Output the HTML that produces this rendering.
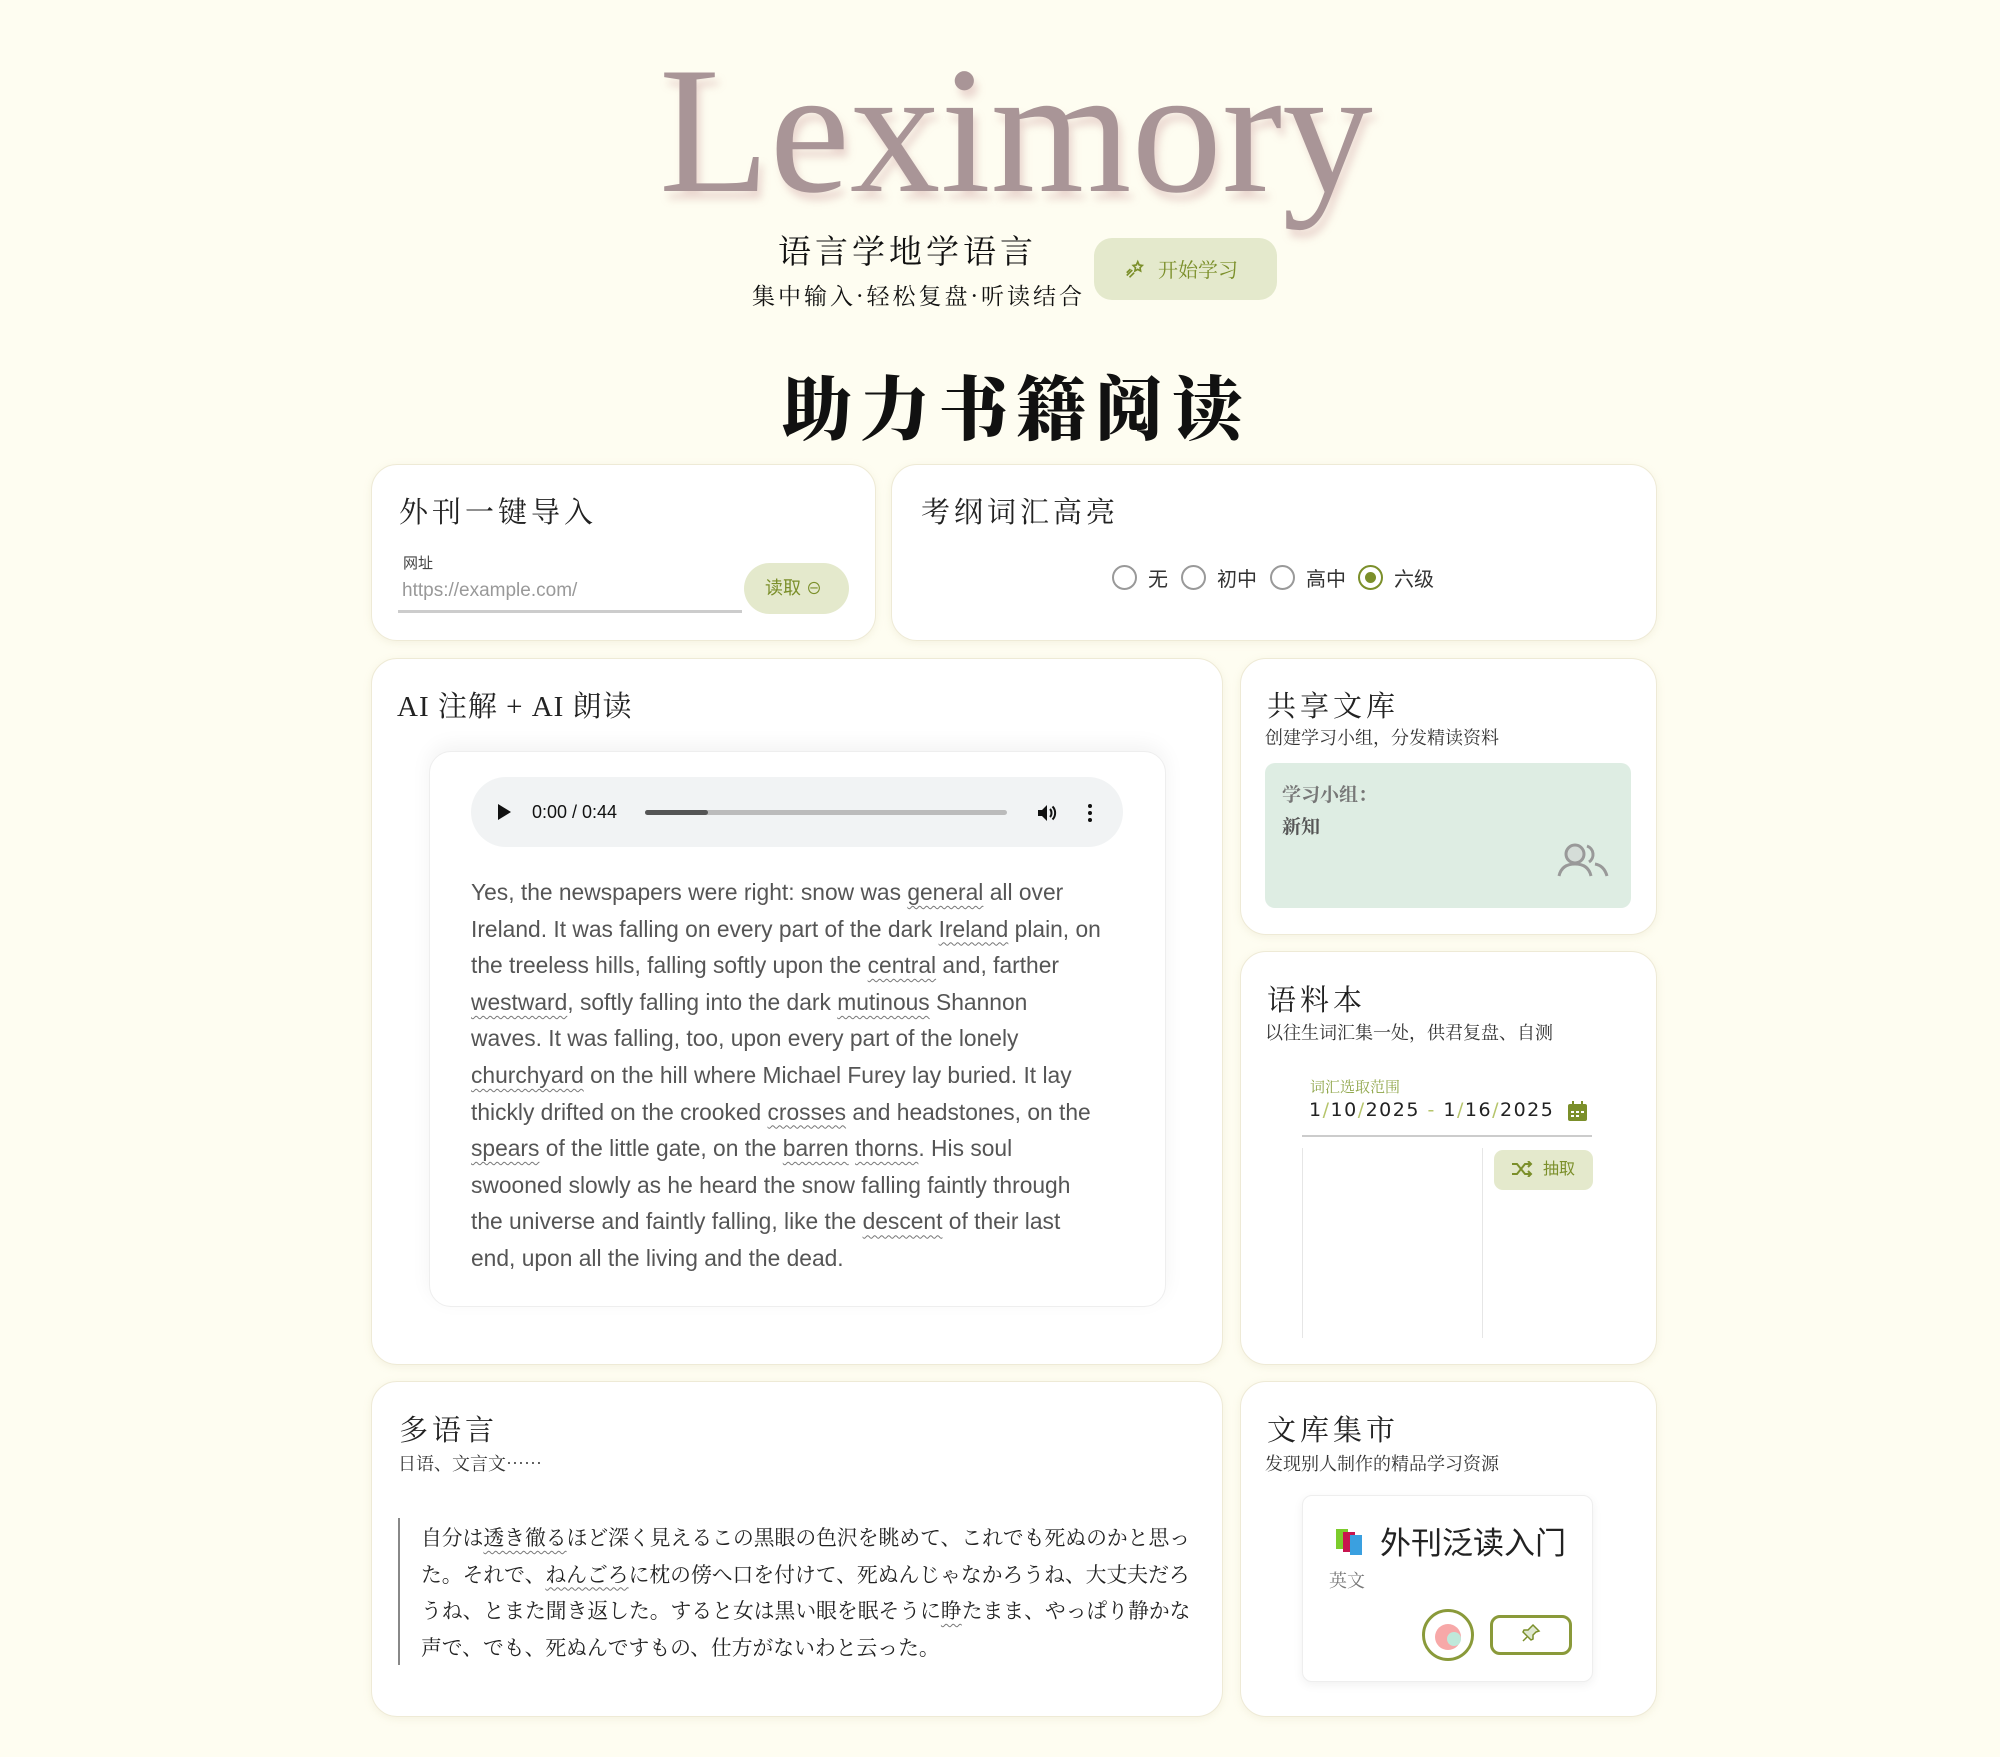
<!DOCTYPE html>
<html><head><meta charset="utf-8">
<style>
*{margin:0;padding:0;box-sizing:border-box}
body{width:2000px;height:1757px;background:#fefdf1;position:relative;overflow:hidden;font-family:"Liberation Sans","Noto Sans CJK SC",sans-serif;color:#222}
.a{position:absolute;white-space:nowrap}
.card{position:absolute;background:#fff;border:1.5px solid #eeead6;border-radius:26px;box-shadow:0 2px 8px rgba(200,190,150,.18)}
.t{position:absolute;font-family:"Noto Serif CJK SC","Liberation Serif",serif;font-size:29px;letter-spacing:4px;color:#222;white-space:nowrap}
.s{position:absolute;font-family:"Noto Serif CJK SC",serif;font-size:18px;color:#333;white-space:nowrap}
.w{text-decoration:underline wavy #777;text-decoration-thickness:1px;text-underline-offset:5px}
.radio{position:absolute;width:25px;height:25px;border:2px solid #999;border-radius:50%}
</style></head><body>

<div class="a" style="left:659px;top:36px;font-family:'Liberation Serif',serif;font-size:181px;line-height:190px;color:#a99597;letter-spacing:0px;text-shadow:4px 8px 8px rgba(200,150,150,.35)">Leximory</div>

<div class="a" style="left:778px;top:226px;font-family:'Noto Serif CJK SC',serif;font-size:33px;letter-spacing:4px;color:#111">语言学地学语言</div>
<div class="a" style="left:752px;top:278px;font-family:'Noto Serif CJK SC',serif;font-size:23px;letter-spacing:3px;color:#111">集中输入·轻松复盘·听读结合</div>
<div class="a" style="left:1094px;top:238px;width:183px;height:62px;background:#e4e9cc;border-radius:18px;color:#7b8f2a;font-size:20px;line-height:62px;padding-left:30px;font-family:'Noto Serif CJK SC',serif">
<svg width="22" height="22" viewBox="0 0 24 24" style="vertical-align:-4px;margin-right:12px" fill="none" stroke="#7b8f2a" stroke-width="1.8"><path d="M15 3l1.5 3.5 3.5.5-2.5 2.5.6 3.5-3.1-1.7-3.1 1.7.6-3.5L10 7l3.5-.5z"/><path d="M9 12l-6 6M11 15l-5 5M7 11l-4 4"/></svg>开始学习</div>

<div class="a" style="left:782px;top:354px;font-family:'Noto Serif CJK SC',serif;font-weight:900;font-size:70px;letter-spacing:8px;color:#111">助力书籍阅读</div>

<!-- row1 -->
<div class="card" style="left:371px;top:464px;width:505px;height:177px"></div>
<div class="t" style="left:399px;top:490px">外刊一键导入</div>
<div class="a" style="left:403px;top:552px;font-size:15px;color:#444">网址</div>
<div class="a" style="left:402px;top:580px;font-size:19px;color:#999">https://example.com/</div>
<div class="a" style="left:398px;top:610px;width:344px;height:3px;background:#ccc"></div>
<div class="a" style="left:744px;top:563px;width:105px;height:51px;border-radius:26px;background:#e4e9cc;color:#7b8f2a;font-size:18px;line-height:51px;padding-left:21px">读取 <span style="font-size:16px">⊖</span></div>

<div class="card" style="left:891px;top:464px;width:766px;height:177px"></div>
<div class="t" style="left:921px;top:490px">考纲词汇高亮</div>
<div class="radio" style="left:1112px;top:565px"></div><div class="a" style="left:1148px;top:563px;font-size:20px;color:#333">无</div>
<div class="radio" style="left:1181px;top:565px"></div><div class="a" style="left:1217px;top:563px;font-size:20px;color:#333">初中</div>
<div class="radio" style="left:1270px;top:565px"></div><div class="a" style="left:1306px;top:563px;font-size:20px;color:#333">高中</div>
<div class="radio" style="left:1358px;top:565px;border-color:#7b8f2a"><div style="position:absolute;left:5px;top:5px;width:11px;height:11px;border-radius:50%;background:#7b8f2a"></div></div><div class="a" style="left:1394px;top:563px;font-size:20px;color:#333">六级</div>

<!-- AI card -->
<div class="card" style="left:371px;top:658px;width:852px;height:707px"></div>
<div class="t" style="left:397px;top:684px;font-family:'Liberation Serif','Noto Serif CJK SC',serif;letter-spacing:1px">AI 注解 + AI 朗读</div>
<div class="a" style="left:429px;top:751px;width:737px;height:556px;background:#fff;border:1.5px solid #eee;border-radius:22px;box-shadow:0 -6px 20px rgba(0,0,0,.05)"></div>
<div class="a" style="left:471px;top:777px;width:652px;height:70px;background:#f1f3f4;border-radius:35px"></div>
<div class="a" style="left:498px;top:804px;width:0;height:0;border-left:13px solid #111;border-top:8px solid transparent;border-bottom:8px solid transparent"></div>
<div class="a" style="left:532px;top:802px;font-size:18px;color:#111">0:00 / 0:44</div>
<div class="a" style="left:645px;top:810px;width:362px;height:5px;background:#bbb;border-radius:3px"><div style="width:63px;height:5px;background:#555;border-radius:3px"></div></div>
<svg class="a" style="left:1035px;top:801px" width="24" height="24" viewBox="0 0 24 24"><path d="M3 9v6h4l5 5V4L7 9z" fill="#111"/><path d="M15 8c2 2 2 6 0 8M17.5 5.5c3.5 3.5 3.5 9.5 0 13" stroke="#111" stroke-width="2" fill="none"/></svg>
<div class="a" style="left:1088px;top:804px;width:4px;height:4px;background:#111;border-radius:50%;box-shadow:0 7px 0 #111,0 14px 0 #111"></div>
<div class="a" style="left:471px;top:874px;font-size:22.8px;line-height:36.6px;color:#555">
Yes, the newspapers were right: snow was <span class="w">general</span> all over<br>
Ireland. It was falling on every part of the dark <span class="w">Ireland</span> plain, on<br>
the treeless hills, falling softly upon the <span class="w">central</span> and, farther<br>
<span class="w">westward</span>, softly falling into the dark <span class="w">mutinous</span> Shannon<br>
waves. It was falling, too, upon every part of the lonely<br>
<span class="w">churchyard</span> on the hill where Michael Furey lay buried. It lay<br>
thickly drifted on the crooked <span class="w">crosses</span> and headstones, on the<br>
<span class="w">spears</span> of the little gate, on the <span class="w">barren</span> <span class="w">thorns</span>. His soul<br>
swooned slowly as he heard the snow falling faintly through<br>
the universe and faintly falling, like the <span class="w">descent</span> of their last<br>
end, upon all the living and the dead.</div>

<!-- shared -->
<div class="card" style="left:1240px;top:658px;width:417px;height:277px"></div>
<div class="t" style="left:1267px;top:684px">共享文库</div>
<div class="s" style="left:1265px;top:724px">创建学习小组，分发精读资料</div>
<div class="a" style="left:1265px;top:763px;width:366px;height:145px;background:#deede3;border-radius:10px"></div>
<div class="a" style="left:1282px;top:778px;font-family:'Noto Serif CJK SC',serif;font-weight:700;font-size:19px;line-height:32px;color:#777">学习小组：<br><span style="color:#555">新知</span></div>
<svg class="a" style="left:1557px;top:842px" width="54" height="36" viewBox="0 0 54 36" fill="none" stroke="#999" stroke-width="3"><circle cx="18" cy="12" r="9" fill="#d5ddd8"/><path d="M2 34c2-9 8-12 16-12s14 3 16 12"/><path d="M30 4a9 9 0 0 1 2 16M38 22c6 1 10 5 12 12"/></svg>

<!-- corpus -->
<div class="card" style="left:1240px;top:951px;width:417px;height:414px"></div>
<div class="t" style="left:1267px;top:978px">语料本</div>
<div class="s" style="left:1265px;top:1019px">以往生词汇集一处，供君复盘、自测</div>
<div class="a" style="left:1310px;top:1076px;font-size:15px;color:#8fa64a;font-family:'Noto Serif CJK SC',serif">词汇选取范围</div>
<div class="a" style="left:1309px;top:1099px;font-family:'DejaVu Sans',sans-serif;font-size:19px;letter-spacing:1.5px;color:#222">1<span style="color:#b5c46a">/</span>10<span style="color:#b5c46a">/</span>2025 <span style="color:#b5c46a">-</span> 1<span style="color:#b5c46a">/</span>16<span style="color:#b5c46a">/</span>2025</div>
<svg class="a" style="left:1567px;top:1101px" width="21" height="21" viewBox="0 0 21 21"><rect x="1" y="3" width="19" height="17" rx="2" fill="#7b8f2a"/><rect x="5" y="0" width="2" height="5" fill="#7b8f2a"/><rect x="14" y="0" width="2" height="5" fill="#7b8f2a"/><g fill="#fff"><rect x="4" y="10" width="3" height="2"/><rect x="9" y="10" width="3" height="2"/><rect x="14" y="10" width="3" height="2"/><rect x="4" y="14" width="3" height="2"/><rect x="9" y="14" width="3" height="2"/></g></svg>
<div class="a" style="left:1302px;top:1135px;width:290px;height:2px;background:#ccc"></div>
<div class="a" style="left:1302px;top:1148px;width:1px;height:190px;background:#e6e6e6"></div>
<div class="a" style="left:1482px;top:1148px;width:1px;height:190px;background:#e6e6e6"></div>
<div class="a" style="left:1494px;top:1150px;width:99px;height:40px;background:#e4e9cc;border-radius:9px;color:#7b8f2a;font-size:16px;line-height:40px;padding-left:17px">
<svg width="22" height="16" viewBox="0 0 22 16" style="vertical-align:-3px;margin-right:10px" fill="none" stroke="#7b8f2a" stroke-width="2"><path d="M1 3h5l8 10h6M1 13h5l8-10h6M17 0l3 3-3 3M17 10l3 3-3 3"/></svg>抽取</div>

<!-- multi -->
<div class="card" style="left:371px;top:1381px;width:852px;height:336px"></div>
<div class="t" style="left:399px;top:1408px">多语言</div>
<div class="s" style="left:398px;top:1450px">日语、文言文……</div>
<div class="a" style="left:398px;top:1518px;width:2px;height:147px;background:#888"></div>
<div class="a" style="left:421px;top:1518px;font-family:'Noto Serif CJK JP',serif;font-size:20.8px;line-height:36.6px;color:#222">自分は<span class="w">透き徹る</span>ほど深く見えるこの黒眼の色沢を眺めて、これでも死ぬのかと思っ<br>た。それで、<span class="w">ねんごろ</span>に枕の傍へ口を付けて、死ぬんじゃなかろうね、大丈夫だろ<br>うね、とまた聞き返した。すると女は黒い眼を眠そうに<span class="w">睁</span>たまま、やっぱり静かな<br>声で、でも、死ぬんですもの、仕方がないわと云った。</div>

<!-- market -->
<div class="card" style="left:1240px;top:1381px;width:417px;height:336px"></div>
<div class="t" style="left:1267px;top:1408px">文库集市</div>
<div class="s" style="left:1265px;top:1450px">发现别人制作的精品学习资源</div>
<div class="a" style="left:1302px;top:1495px;width:291px;height:187px;background:#fff;border:1.5px solid #eee;border-radius:10px;box-shadow:0 3px 10px rgba(0,0,0,.06)"></div>
<svg class="a" style="left:1334px;top:1527px" width="32" height="30" viewBox="0 0 32 30"><rect x="2" y="2" width="12" height="20" fill="#7ccc2c"/><rect x="9" y="5" width="12" height="20" fill="#c8154e"/><rect x="16" y="8" width="12" height="20" fill="#3aa0e0"/></svg>
<div class="a" style="left:1380px;top:1518px;font-family:'Noto Sans CJK SC',sans-serif;font-size:31px;color:#222">外刊泛读入门</div>
<div class="a" style="left:1329px;top:1567px;font-family:'Noto Serif CJK SC',serif;font-size:18px;color:#777">英文</div>
<div class="a" style="left:1422px;top:1609px;width:52px;height:52px;border:3px solid #8a9a3a;border-radius:50%;background:#fff;overflow:hidden">
<div style="position:absolute;left:10px;top:12px;width:26px;height:26px;border-radius:50%;background:#f7a8a8"></div><div style="position:absolute;left:22px;top:20px;width:14px;height:14px;border-radius:50%;background:#bfe8da"></div></div>
<div class="a" style="left:1490px;top:1615px;width:82px;height:40px;border:3px solid #8a9a3a;border-radius:10px;text-align:center;line-height:34px">
<svg width="20" height="20" viewBox="0 0 20 20" style="vertical-align:-4px" fill="#dfe8d0" stroke="#7b8f2a" stroke-width="1.5"><path d="M12 2l6 6-3 1-3 3 0 4-2 1-8-8 1-2h4l3-3z"/><path d="M6 14l-4 4"/></svg></div>

</body></html>
